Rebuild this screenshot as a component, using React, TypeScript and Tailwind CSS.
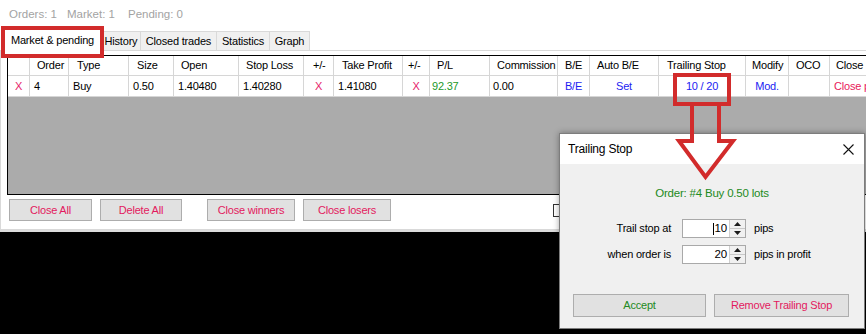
import React from "react";

type Col = { w: string; head: string; hp: string; val: string; cls: string };

const cols: Col[] = [
  { w: "w-[22px]", head: "", hp: "", val: "X", cls: "justify-center text-[#e6226a]" },
  { w: "w-[39px]", head: "Order", hp: "pl-[7px]", val: "4", cls: "pl-[4px]" },
  { w: "w-[60px]", head: "Type", hp: "pl-[8px]", val: "Buy", cls: "pl-[4px]" },
  { w: "w-[45px]", head: "Size", hp: "pl-[8px]", val: "0.50", cls: "pl-[4px]" },
  { w: "w-[65px]", head: "Open", hp: "pl-[7px]", val: "1.40480", cls: "pl-[4px]" },
  { w: "w-[65px]", head: "Stop Loss", hp: "pl-[7px]", val: "1.40280", cls: "pl-[4px]" },
  { w: "w-[30px]", head: "+/-", hp: "pl-[9px]", val: "X", cls: "justify-center text-[#e6226a]" },
  { w: "w-[69px]", head: "Take Profit", hp: "pl-[8px]", val: "1.41080", cls: "pl-[4px]" },
  { w: "w-[27px]", head: "+/-", hp: "pl-[5px]", val: "X", cls: "justify-center text-[#e6226a]" },
  { w: "w-[60px]", head: "P/L", hp: "pl-[7px]", val: "92.37", cls: "pl-[2px] text-[#22992a]" },
  { w: "w-[68px]", head: "Commission", hp: "pl-[7px]", val: "0.00", cls: "pl-[3px]" },
  { w: "w-[32px]", head: "B/E", hp: "pl-[7px]", val: "B/E", cls: "justify-center text-[#1c1cf2]" },
  { w: "w-[69px]", head: "Auto B/E", hp: "pl-[7px]", val: "Set", cls: "justify-center text-[#1c1cf2]" },
  { w: "w-[87px]", head: "Trailing Stop", hp: "pl-[8px]", val: "10 / 20", cls: "justify-center text-[#1c1cf2]" },
  { w: "w-[43px]", head: "Modify", hp: "pl-[6px]", val: "Mod.", cls: "justify-center text-[#1c1cf2]" },
  { w: "w-[41px]", head: "OCO", hp: "pl-[7px]", val: "", cls: "" },
  { w: "w-[90px]", head: "Close", hp: "pl-[6px]", val: "Close position", cls: "pl-[4px] text-[#e8195a]" },
];

const tabs = [
  { label: "History", w: "w-[39px]" },
  { label: "Closed trades", w: "w-[76px]" },
  { label: "Statistics", w: "w-[53px]" },
  { label: "Graph", w: "w-[40px]" },
];

function Spin({ value, caret }: { value: string; caret?: boolean }) {
  return (
    <div className="flex h-[19px] w-[64px] border border-[#a9a9a9] bg-white">
      <div className="flex flex-1 items-center justify-end pr-[2px] text-[11.5px]">
        {caret && <span className="mr-[1px] h-[12px] w-px bg-black" />}
        {value}
      </div>
      <div className="flex w-[16px] flex-col border-l border-[#cfcfcf] bg-[#f0f0f0]">
        <div className="flex flex-1 items-center justify-center border-b border-[#c8c8c8]">
          <svg width="7" height="4" viewBox="0 0 7 4">
            <path d="M0 4 L3.5 0 L7 4 Z" fill="#1a1a1a" />
          </svg>
        </div>
        <div className="flex flex-1 items-center justify-center">
          <svg width="7" height="4" viewBox="0 0 7 4">
            <path d="M0 0 L3.5 4 L7 0 Z" fill="#1a1a1a" />
          </svg>
        </div>
      </div>
    </div>
  );
}

export default function App() {
  return (
    <div className="relative flex h-[334px] w-[866px] flex-col overflow-hidden bg-black font-['Liberation_Sans',Arial,sans-serif] text-[11px] tracking-[-0.2px] text-black">
      {/* main window */}
      <div className="bg-white">
        <div className="flex h-[30px] pl-[9px] pt-[8px] text-[11.5px] leading-[13px] tracking-normal text-[#a3a3a3]">
          <span className="w-[58px]">Orders: 1</span>
          <span className="w-[61px]">Market: 1</span>
          <span>Pending: 0</span>
        </div>

        {/* tabs */}
        <div className="flex h-[20px] items-end pl-[3px]">
          <div className="relative z-10 -mb-px flex h-[22px] w-[99px] items-center justify-center border border-b-0 border-[#d9d9d9] bg-white">
            Market &amp; pending
          </div>
          {tabs.map((t) => (
            <div
              key={t.label}
              className={`flex h-[19px] ${t.w} items-center justify-center whitespace-nowrap border-r border-t border-[#d9d9d9] bg-[#f0f0f0]`}
            >
              {t.label}
            </div>
          ))}
        </div>

        {/* panel */}
        <div className="flex h-[180px] flex-col border-b border-l border-t border-[#d9d9d9] pl-[6px] pt-[4px]">
          <div className="flex h-[140px] flex-col border-b border-l border-t border-black">
            <div className="flex h-[20px] border-b border-[#d6d6d6] bg-white">
              {cols.map((c, i) => (
                <div key={i} className={`flex shrink-0 items-center whitespace-nowrap border-r border-[#d6d6d6] ${c.w} ${c.hp}`}>
                  {c.head}
                </div>
              ))}
            </div>
            <div className="flex h-[21px] border-b border-[#d6d6d6] bg-white">
              {cols.map((c, i) => (
                <div key={i} className={`flex shrink-0 items-center whitespace-nowrap border-r border-[#d6d6d6] ${c.w} ${c.cls}`}>
                  {c.val}
                </div>
              ))}
            </div>
            <div className="flex-1 bg-[#ababab]" />
          </div>

          <div className="mt-[4px] flex h-[22px] items-center text-[#e3195e]">
            <button className="ml-[2px] h-[22px] w-[83px] border border-[#adadad] bg-[#e1e1e1]">Close All</button>
            <button className="ml-[8px] h-[22px] w-[82px] border border-[#adadad] bg-[#e1e1e1]">Delete All</button>
            <button className="ml-[25px] h-[22px] w-[88px] border border-[#adadad] bg-[#e1e1e1]">Close winners</button>
            <button className="ml-[8px] h-[22px] w-[88px] border border-[#adadad] bg-[#e1e1e1]">Close losers</button>
            <div className="ml-[162px] h-[13px] w-[13px] border border-[#333333] bg-white" />
          </div>
        </div>
      </div>
      <div className="h-[2px] bg-[#dcdcdc]" />

      {/* red highlight boxes */}
      <div className="absolute left-[1px] top-[26px] z-20 h-[32px] w-[103px] border-[4px] border-[#d22b2b]" />
      <div className="absolute left-[673px] top-[73px] z-20 h-[33px] w-[58px] border-[4px] border-[#d22b2b]" />

      {/* dialog */}
      <div className="absolute left-[559px] top-[133px] z-10 flex h-[196px] w-[306px] flex-col border border-[#7d7d7d] bg-[#f0f0f0] shadow-[0_0_6px_rgba(0,0,0,0.35)]">
        <div className="flex h-[30px] items-center justify-between bg-white pl-[8px] pr-[10px]">
          <span className="text-[12px]">Trailing Stop</span>
          <svg width="11" height="11" viewBox="0 0 11 11">
            <path d="M0.5 0.5 L10.5 10.5 M10.5 0.5 L0.5 10.5" stroke="#111" strokeWidth="1.1" />
          </svg>
        </div>
        <div className="flex flex-1 flex-col pt-[22px]">
          <div className="text-center text-[11.5px] leading-[14px] text-[#228a22]">Order: #4 Buy 0.50 lots</div>
          <div className="mt-[19px] flex items-center">
            <div className="w-[111px] text-right">Trail stop at</div>
            <div className="ml-[11px]">
              <Spin value="10" caret />
            </div>
            <span className="ml-[8px]">pips</span>
          </div>
          <div className="mt-[7px] flex items-center">
            <div className="w-[111px] text-right">when order is</div>
            <div className="ml-[11px]">
              <Spin value="20" />
            </div>
            <span className="ml-[8px]">pips in profit</span>
          </div>
          <div className="mt-[30px] flex pl-[13px]">
            <button className="h-[23px] w-[133px] border border-[#adadad] bg-[#e1e1e1] text-[#228a22]">Accept</button>
            <button className="ml-[8px] h-[23px] w-[135px] border border-[#adadad] bg-[#e1e1e1] text-[#e3195e]">
              Remove Trailing Stop
            </button>
          </div>
        </div>
      </div>

      {/* arrow */}
      <svg className="absolute left-[670px] top-[103px] z-20 overflow-visible" width="70" height="80" viewBox="0 0 70 80">
        <polyline
          points="22,0 22,38 9,38 35.5,74 63,38 49,38 49,0"
          fill="none"
          stroke="#d22b2b"
          strokeWidth="4"
          strokeLinejoin="miter"
        />
      </svg>
    </div>
  );
}
